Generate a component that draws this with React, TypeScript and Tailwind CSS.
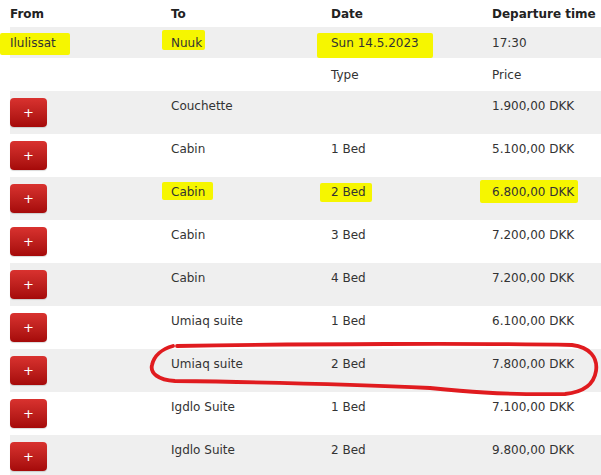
import type { ReactNode } from 'react';

const items = [
  { type: 'Couchette', beds: '', price: '1.900,00 DKK' },
  { type: 'Cabin', beds: '1 Bed', price: '5.100,00 DKK' },
  { type: 'Cabin', beds: '2 Bed', price: '6.800,00 DKK', marked: true },
  { type: 'Cabin', beds: '3 Bed', price: '7.200,00 DKK' },
  { type: 'Cabin', beds: '4 Bed', price: '7.200,00 DKK' },
  { type: 'Umiaq suite', beds: '1 Bed', price: '6.100,00 DKK' },
  { type: 'Umiaq suite', beds: '2 Bed', price: '7.800,00 DKK' },
  { type: 'Igdlo Suite', beds: '1 Bed', price: '7.100,00 DKK' },
  { type: 'Igdlo Suite', beds: '2 Bed', price: '9.800,00 DKK' },
];

// highlighter stroke sitting behind the text
function Mark({ box, children }: { box: string; children: ReactNode }) {
  return (
    <span className="relative inline-block">
      <span className={`absolute bg-[#f6f600] rounded-[2px] ${box}`} />
      <span className="relative">{children}</span>
    </span>
  );
}

function PlusButton() {
  return (
    <button className="w-[37px] h-[29px] rounded-[4px] bg-linear-to-b from-[#d9322f] to-[#a50909] text-white text-[13px] leading-none flex items-center justify-center shadow-[0_1px_1px_rgba(0,0,0,0.15)]">
      +
    </button>
  );
}

export default function App() {
  const cols = 'grid grid-cols-[161px_160px_161px_1fr]';
  return (
    <div className="relative w-[601px] h-[475px] overflow-hidden bg-white font-['DejaVu_Sans',sans-serif] text-[12px] leading-[16px] text-[#333]">
      <div className="pl-[10px]">
        <div className={`${cols} h-[27px] items-center font-bold text-[#222]`}>
          <div>From</div>
          <div>To</div>
          <div>Date</div>
          <div>Departure time</div>
        </div>

        <div className={`${cols} h-[31px] items-center bg-[#efefef]`}>
          <div>
            <Mark box="left-[-10px] w-[70px] top-[-2px] h-[22px]">Ilulissat</Mark>
          </div>
          <div>
            <Mark box="left-[-9px] w-[43px] top-[-5px] h-[20px]">Nuuk</Mark>
          </div>
          <div>
            <Mark box="left-[-14px] w-[116px] top-[-2px] h-[25px]">Sun 14.5.2023</Mark>
          </div>
          <div>17:30</div>
        </div>

        <div className={`${cols} h-[33px] items-center`}>
          <div />
          <div />
          <div>Type</div>
          <div>Price</div>
        </div>

        {items.map((it, i) => (
          <div
            key={i}
            className={`${cols} h-[43px] items-start pt-[7px] ${i % 2 === 0 ? 'bg-[#efefef]' : 'bg-white'}`}
          >
            <div>
              <PlusButton />
            </div>
            <div>
              {it.marked ? (
                <Mark box="left-[-9px] w-[51px] top-[-2px] h-[18px]">{it.type}</Mark>
              ) : (
                it.type
              )}
            </div>
            <div>
              {it.marked ? (
                <Mark box="left-[-11px] w-[52px] top-[-1px] h-[19px]">{it.beds}</Mark>
              ) : (
                it.beds
              )}
            </div>
            <div>
              {it.marked ? (
                <Mark box="left-[-12px] w-[98px] top-[-4px] h-[23px]">{it.price}</Mark>
              ) : (
                it.price
              )}
            </div>
          </div>
        ))}
      </div>

      {/* hand-drawn loop around the Umiaq suite 2 Bed row */}
      <svg
        className="absolute left-0 top-0 pointer-events-none"
        width="601"
        height="475"
        viewBox="0 0 601 475"
        fill="none"
      >
        <path
          d="M 177 346 C 300 344, 480 343, 572 345 C 590 347, 598 358, 596 371 C 594 384, 585 392, 565 394 C 500 395, 460 391, 430 388 C 350 384, 250 382, 175 381 C 158 380, 150 373, 152 365 C 154 356, 162 349, 173 346"
          stroke="#e01b1f"
          strokeWidth="3.8"
          strokeLinecap="round"
          strokeLinejoin="round"
        />
      </svg>
    </div>
  );
}
